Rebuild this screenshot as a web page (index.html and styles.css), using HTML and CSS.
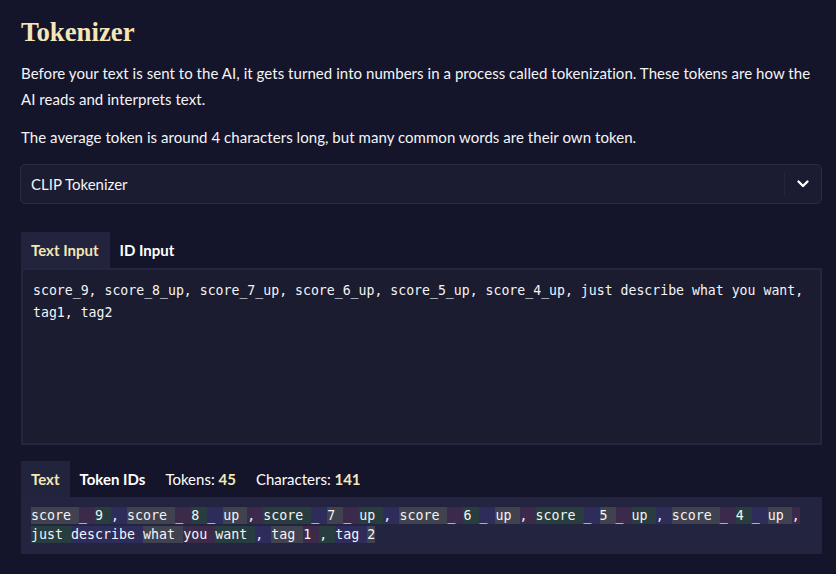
FILE: index.html
```html
<!DOCTYPE html>
<html>
<head>
<meta charset="utf-8">
<link rel="stylesheet" href="styles.css">
</head>
<body>
<main class="page">
  <h1 class="title">Tokenizer</h1>
  <p class="lead">Before your text is sent to the AI, it gets turned into numbers in a process called tokenization. These tokens are how the AI reads and interprets text.</p>
  <p class="lead second">The average token is around 4 characters long, but many common words are their own token.</p>

  <div class="select">
    <span class="select-value">CLIP Tokenizer</span>
    <span class="select-sep"></span>
    <svg class="chev" width="14" height="10" viewBox="0 0 14 10"><path d="M2.5 2.5 L7 7 L11.5 2.5" fill="none" stroke="#ffffff" stroke-width="2.4" stroke-linecap="round" stroke-linejoin="round"/></svg>
  </div>

  <div class="tabs input-tabs">
    <div class="tab active">Text Input</div>
    <div class="tab">ID Input</div>
  </div>
  <div class="textarea">score_9, score_8_up, score_7_up, score_6_up, score_5_up, score_4_up, just describe what you want, tag1, tag2</div>

  <div class="tabs output-tabs">
    <div class="tab active">Text</div>
    <div class="tab">Token IDs</div>
    <div class="stat">Tokens: <b>45</b></div>
    <div class="stat">Characters: <b>141</b></div>
  </div>
  <div class="tokens"><span class="t0">score </span><span class="t1">_ </span><span class="t2">9 </span><span class="t3">, </span><span class="t0">score </span><span class="t1">_ </span><span class="t2">8 </span><span class="t3">_ </span><span class="t0">up </span><span class="t1">, </span><span class="t2">score </span><span class="t3">_ </span><span class="t0">7 </span><span class="t1">_ </span><span class="t2">up </span><span class="t3">, </span><span class="t0">score </span><span class="t1">_ </span><span class="t2">6 </span><span class="t3">_ </span><span class="t0">up </span><span class="t1">, </span><span class="t2">score </span><span class="t3">_ </span><span class="t0">5 </span><span class="t1">_ </span><span class="t2">up </span><span class="t3">, </span><span class="t0">score </span><span class="t1">_ </span><span class="t2">4 </span><span class="t3">_ </span><span class="t0">up </span><span class="t1">, </span><span class="t2">just </span><span class="t3">describe </span><span class="t0">what </span><span class="t1">you </span><span class="t2">want </span><span class="t3">, </span><span class="t0">tag </span><span class="t1">1 </span><span class="t2">, </span><span class="t3">tag </span><span class="t0">2 </span></div>
</main>
</body>
</html>
```

FILE: styles.css
```css
html, body {
  margin: 0;
  padding: 0;
  background: #14152b;
}
body {
  font-family: Lato, "Noto Sans", sans-serif;
  color: #f4f4f6;
}
.page {
  width: 802px;
  padding: 12px 0 0 20px;
}
.title {
  margin: 0 0 0 1px;
  font-family: "Liberation Serif", serif;
  font-weight: bold;
  font-size: 26.8px;
  line-height: 40px;
  color: #f4e6b6;
}
.lead {
  margin: 8px 0 0 1px;
  font-size: 15px;
  letter-spacing: 0.05px;
  line-height: 26px;
}
.lead.second {
  margin-top: 12px;
}
.select {
  margin-top: 14px;
  height: 38px;
  border: 1px solid #2a2c44;
  border-radius: 5px;
  background: #1b1c31;
  display: flex;
  align-items: center;
  padding-left: 10px;
}
.select-value {
  flex: 1;
  font-size: 15px;
}
.select-sep {
  width: 1px;
  height: 24px;
  background: #24263c;
}
.chev {
  margin: 0 11px 0 11px;
}
.tabs {
  display: flex;
  align-items: center;
  height: 36px;
  margin-left: 1px;
}
.input-tabs {
  margin-top: 28px;
}
.tab {
  height: 36px;
  padding: 0 10px;
  display: flex;
  align-items: center;
  font-size: 15px;
  font-weight: bold;
  color: #ffffff;
}
.input-tabs .tab.active {
  padding-right: 11px;
}
.tab.active {
  background: #22243d;
  color: #f4e6b6;
}
.stat {
  padding: 0 10px;
  font-size: 15px;
  color: #ffffff;
}
.stat b {
  color: #f4e6b6;
}
.textarea {
  margin-left: 1px;
  height: 153px;
  border: 2px solid #24263f;
  background: #1b1c30;
  padding: 10px 10px;
  font-family: "DejaVu Sans Mono", monospace;
  font-size: 13.2px;
  line-height: 22px;
  color: #f4f4f6;
}
.output-tabs {
  margin-top: 16px;
}
.tokens {
  margin-left: 1px;
  background: #222440;
  padding: 9px 10px 10px;
  font-family: "DejaVu Sans Mono", monospace;
  font-size: 13.3px;
  line-height: 19px;
  color: #f4f4f6;
}
.tokens span {
  padding: 1px 0;
}
.t0 { background: #41424f; }
.t1 { background: #3c2a4b; }
.t2 { background: #283d3f; }
.t3 { background: #2d2c5b; }
```
